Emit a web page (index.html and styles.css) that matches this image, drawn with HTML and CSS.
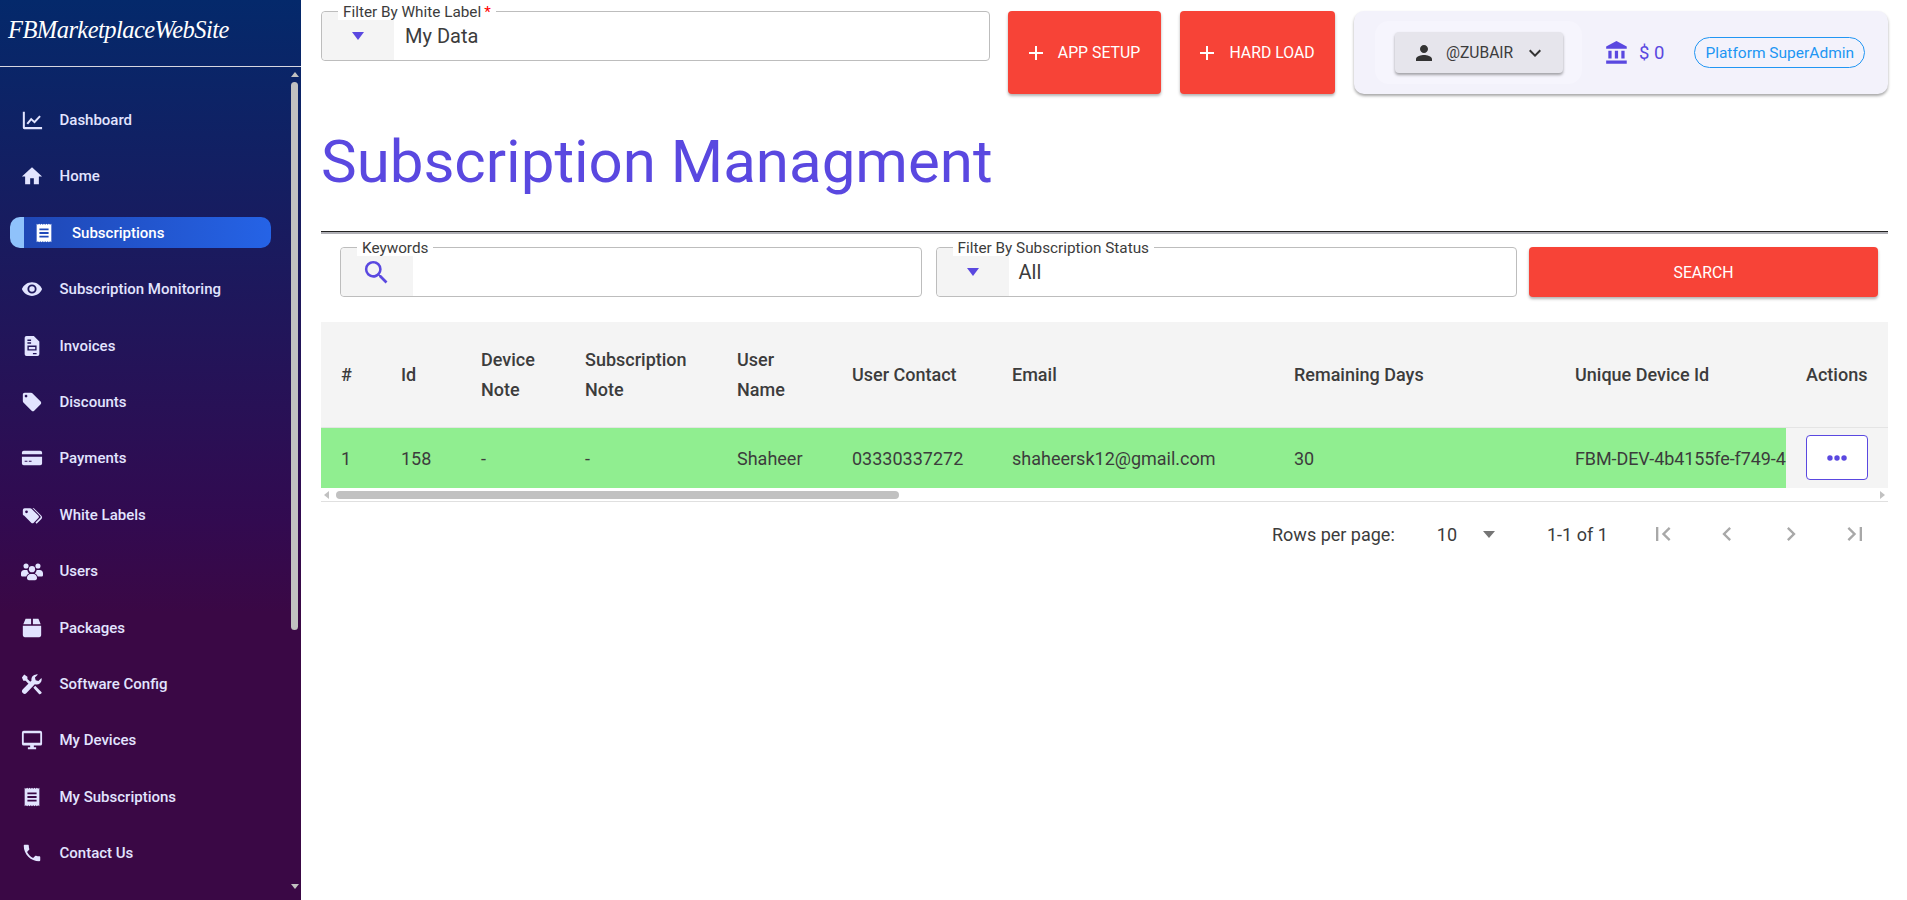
FILE: index.html
```html
<!DOCTYPE html>
<html>
<head>
    <title>Subscription Managment</title>
    <link rel="stylesheet" href="styles.css">
</head>
<body>
    <div class="app">
        <aside class="sidebar">
            <div class="logo">FBMarketplaceWebSite</div>
            <div class="nav-wrap">
                <nav class="nav">
                    <a class="nav-item"><svg viewBox="0 0 24 24"><path d="M2 3h2.200v16.600H23V22H3.500A1.500 1.500 0 0 1 2 20.500zM6 15.500l5-6 3.600 3.200L20 7l1.600 1.500-6.800 7.200-3.500-3.100-3.600 4.400z"/></svg>Dashboard</a>
                    <a class="nav-item"><svg viewBox="0 0 24 24"><path d="M10 21v-6.500h4V21h5.500v-8.500H23L12 2.500 1 12.500h3.500V21z"/></svg>Home</a>
                    <a class="nav-item active"><svg viewBox="0 0 24 24"><path fill-rule="evenodd" d="M4 2l1.300 1L6.700 2 8 3l1.300-1 1.400 1L12 2l1.300 1 1.400-1L16 3l1.300-1 1.400 1L20 2v20l-1.300-1-1.400 1-1.300-1-1.300 1-1.400-1-1.300 1-1.300-1-1.400 1L8 21l-1.300 1-1.400-1L4 22zM7 7v2h10V7zm0 4v2h10v-2zm0 4v2h10v-2z"/></svg>Subscriptions</a>
                    <a class="nav-item"><svg viewBox="0 0 24 24"><path fill-rule="evenodd" d="M12 4.500C7 4.500 2.730 7.610 1 12c1.730 4.390 6 7.500 11 7.500s9.270-3.110 11-7.500c-1.730-4.390-6-7.500-11-7.500zM12 17a5 5 0 1 1 0-10 5 5 0 0 1 0 10zm0-8a3 3 0 1 0 0 6 3 3 0 0 0 0-6z"/></svg>Subscription Monitoring</a>
                    <a class="nav-item"><svg viewBox="0 0 24 24"><path fill-rule="evenodd" d="M6 1h8l6 6v14a2 2 0 0 1-2 2H6a2 2 0 0 1-2-2V3a2 2 0 0 1 2-2zm1 4v1.500h4V5zm0 3v1.500h4V8zm0 3.500V17h10v-5.500zm1.500 1.500h7v2.500h-7zM13 19.500V21h4v-1.500z"/></svg>Invoices</a>
                    <a class="nav-item"><svg viewBox="0 0 24 24"><path fill-rule="evenodd" d="M21.410 11.580l-9-9C12.050 2.220 11.550 2 11 2H4c-1.100 0-2 .9-2 2v7c0 .55.22 1.050.59 1.420l9 9c.36.36.86.58 1.410.58s1.050-.22 1.410-.59l7-7c.37-.36.59-.86.59-1.410s-.23-1.060-.59-1.420zM5.500 7C4.670 7 4 6.330 4 5.500S4.670 4 5.500 4 7 4.670 7 5.500 6.330 7 5.500 7z"/></svg>Discounts</a>
                    <a class="nav-item"><svg viewBox="0 0 24 24"><path fill-rule="evenodd" d="M3 4h18a2 2 0 0 1 2 2v2H1V6a2 2 0 0 1 2-2zM1 10.500h22V18a2 2 0 0 1-2 2H3a2 2 0 0 1-2-2zM4 15v1.200h3V15zm4.500 0v1.200h3V15z"/></svg>Payments</a>
                    <a class="nav-item"><svg viewBox="0 0 24 24"><path fill-rule="evenodd" d="M2 6.500A2 2 0 0 1 4 4.500h6c.5 0 1 .2 1.400.6l7.500 7.500a2 2 0 0 1 0 2.800l-5 5a2 2 0 0 1-2.800 0l-7.500-7.500A2 2 0 0 1 2 11.500zM6 7a1.500 1.500 0 1 0 0 3 1.500 1.500 0 0 0 0-3zM14 4.500l8 8a2.800 2.800 0 0 1 0 4l-5 5-1.200-1.200 5.200-5.300a1.300 1.300 0 0 0 0-1.800l-8.500-8.700z"/></svg>White Labels</a>
                    <a class="nav-item"><svg viewBox="0 0 24 24"><circle cx="5.500" cy="6.500" r="2.800"/><circle cx="18.500" cy="6.500" r="2.800"/><circle cx="12" cy="10" r="3.400"/><path d="M0 14.500c0-2 1.500-3.500 3.500-3.500h3.400c.2 1.500 1 2.700 2 3.600-1.600.7-2.800 2-3.200 3.400H1.500A1.500 1.500 0 0 1 0 16.500zM24 14.500c0-2-1.500-3.500-3.500-3.500h-3.400c-.2 1.500-1 2.700-2 3.600 1.600.7 2.800 2 3.200 3.400h4.200a1.500 1.500 0 0 0 1.500-1.500zM6.500 19.500c0-2.300 1.800-4.300 4-4.300h3c2.200 0 4 2 4 4.300V20a2 2 0 0 1-2 2h-7a2 2 0 0 1-2-2z"/></svg>Users</a>
                    <a class="nav-item"><svg viewBox="0 0 24 24"><path d="M5 2h6v6H2.500zM13 2h6l2.500 6H13zM2 9.500h20V20a2 2 0 0 1-2 2H4a2 2 0 0 1-2-2z"/></svg>Packages</a>
                    <a class="nav-item"><svg viewBox="0 0 24 24"><path d="M3.500 1.500L7 4v2.500l4.500 4.500-2 2L5 8.500H2.500L1 5zM16.800 1.500a5.700 5.700 0 0 1 1.700.2l-3.300 3.300.8 3 3 .8 3.300-3.300a5.500 5.500 0 0 1-7.200 6.700L6 21.800a2.800 2.800 0 0 1-4-4l9.500-9.500a5.500 5.500 0 0 1 5.300-6.800zM15.500 14l7 7a2 2 0 0 1-2.600 2.100L13.500 16z"/></svg>Software Config</a>
                    <a class="nav-item"><svg viewBox="0 0 24 24"><path fill-rule="evenodd" d="M3 2h18a2 2 0 0 1 2 2v12a2 2 0 0 1-2 2h-7v2h2.500v2h-9v-2H10v-2H3a2 2 0 0 1-2-2V4a2 2 0 0 1 2-2zm0 2.500V15h18V4.500z"/></svg>My Devices</a>
                    <a class="nav-item"><svg viewBox="0 0 24 24"><path fill-rule="evenodd" d="M4 2l1.300 1L6.700 2 8 3l1.300-1 1.400 1L12 2l1.300 1 1.400-1L16 3l1.300-1 1.400 1L20 2v20l-1.300-1-1.400 1-1.300-1-1.300 1-1.400-1-1.300 1-1.300-1-1.400 1L8 21l-1.300 1-1.400-1L4 22zM7 7v2h10V7zm0 4v2h10v-2zm0 4v2h10v-2z"/></svg>My Subscriptions</a>
                    <a class="nav-item"><svg viewBox="0 0 24 24"><path d="M6.620 10.790c1.440 2.830 3.760 5.140 6.590 6.590l2.200-2.200c.27-.27.67-.36 1.020-.24 1.120.37 2.330.57 3.570.57.55 0 1 .45 1 1V20c0 .55-.45 1-1 1-9.390 0-17-7.610-17-17 0-.55.45-1 1-1h3.500c.55 0 1 .45 1 1 0 1.250.2 2.450.57 3.570.11.35.03.74-.25 1.020z"/></svg>Contact Us</a>
                </nav>
                <div class="v-scroll">
                    <span class="arrow-up"></span>
                    <div class="v-track"><div class="v-thumb"></div></div>
                    <span class="arrow-down"></span>
                </div>
            </div>
        </aside>

        <main class="main">
            <div class="top-row">
                <div class="field top-field">
                    <label>Filter By White Label<b>*</b></label>
                    <div class="addon"><span class="caret"></span></div>
                    <div class="value">My Data</div>
                </div>
                <button class="btn-red btn-setup"><svg viewBox="0 0 24 24"><path d="M19 13h-6v6h-2v-6H5v-2h6V5h2v6h6z"/></svg>APP SETUP</button>
                <button class="btn-red btn-load"><svg viewBox="0 0 24 24"><path d="M19 13h-6v6h-2v-6H5v-2h6V5h2v6h6z"/></svg>HARD LOAD</button>
                <div class="user-panel">
                    <div class="user-halo">
                        <div class="user-btn">
                            <svg viewBox="0 0 24 24"><path d="M12 12c2.210 0 4-1.790 4-4s-1.790-4-4-4-4 1.790-4 4 1.790 4 4 4zm0 2c-2.670 0-8 1.340-8 4v2h16v-2c0-2.660-5.330-4-8-4z"/></svg>
                            <span>@ZUBAIR</span>
                            <svg viewBox="0 0 24 24"><path d="M16.590 8.590L12 13.170 7.410 8.590 6 10l6 6 6-6z"/></svg>
                        </div>
                    </div>
                    <div class="balance">
                        <svg viewBox="0 0 24 24"><path d="M4 10v7h3v-7zm6 0v7h3v-7zM2 22h19v-3H2zm14-12v7h3v-7zm-4.500-9L2 6v2h19V6z"/></svg>
                        <span>$ 0</span>
                    </div>
                    <div class="role-chip">Platform SuperAdmin</div>
                </div>
            </div>

            <h1 class="page-title">Subscription Managment</h1>
            <div class="divider"></div>

            <div class="filter-row">
                <div class="field kw-field">
                    <label>Keywords</label>
                    <div class="addon"><svg viewBox="0 0 24 24"><path d="M15.500 14h-.79l-.28-.27A6.470 6.470 0 0 0 16 9.500 6.500 6.500 0 1 0 9.500 16c1.610 0 3.090-.59 4.230-1.570l.27.28v.79l5 4.990L20.490 19zm-6 0C7.010 14 5 11.990 5 9.500S7.010 5 9.500 5 14 7.010 14 9.500 11.990 14 9.500 14z"/></svg></div>
                    <div class="value"></div>
                </div>
                <div class="field">
                    <label>Filter By Subscription Status</label>
                    <div class="addon"><span class="caret"></span></div>
                    <div class="value">All</div>
                </div>
                <button class="btn-red btn-search">SEARCH</button>
            </div>

            <table class="data-table">
                <colgroup>
                    <col class="c-num"><col class="c-id"><col class="c-device"><col class="c-sub"><col class="c-user"><col class="c-contact"><col class="c-email"><col class="c-days"><col class="c-unique"><col class="c-actions">
                </colgroup>
                <thead>
                    <tr>
                        <th>#</th>
                        <th>Id</th>
                        <th>Device Note</th>
                        <th>Subscription Note</th>
                        <th>User Name</th>
                        <th>User Contact</th>
                        <th>Email</th>
                        <th>Remaining Days</th>
                        <th>Unique Device Id</th>
                        <th class="actions-head">Actions</th>
                    </tr>
                </thead>
                <tbody>
                    <tr>
                        <td>1</td>
                        <td>158</td>
                        <td>-</td>
                        <td>-</td>
                        <td>Shaheer</td>
                        <td>03330337272</td>
                        <td>shaheersk12@gmail.com</td>
                        <td>30</td>
                        <td class="clip">FBM-DEV-4b4155fe-f749-4</td>
                        <td class="actions-cell"><button class="more-btn"><svg viewBox="0 0 24 24"><circle cx="5.500" cy="12" r="2.500"/><circle cx="12" cy="12" r="2.500"/><circle cx="18.500" cy="12" r="2.500"/></svg></button></td>
                    </tr>
                </tbody>
            </table>
            <div class="h-scroll">
                <span class="arrow-left"></span>
                <div class="h-track"><div class="h-thumb"></div></div>
                <span class="arrow-right"></span>
            </div>

            <div class="pager">
                <span class="rows-label">Rows per page:</span>
                <span class="rows-value">10</span>
                <span class="rows-caret"></span>
                <span class="rows-range">1-1 of 1</span>
                <svg viewBox="0 0 24 24"><path d="M18.410 16.590L13.820 12l4.590-4.590L17 6l-6 6 6 6zM6 6h2v12H6z"/></svg>
                <svg viewBox="0 0 24 24"><path d="M15.410 7.410L14 6l-6 6 6 6 1.410-1.410L10.830 12z"/></svg>
                <svg viewBox="0 0 24 24"><path d="M10 6L8.590 7.410 13.170 12l-4.580 4.590L10 18l6-6z"/></svg>
                <svg viewBox="0 0 24 24"><path d="M5.590 7.410L10.180 12l-4.590 4.590L7 18l6-6-6-6zM16 6h2v12h-2z"/></svg>
            </div>
        </main>
    </div>
</body>
</html>
```

FILE: styles.css
```css
* {
    box-sizing: border-box;
}
html, body {
    height: 100%;
}
body {
    margin: 0;
    background-color: #fff;
    font-family: Roboto, Arial, sans-serif;
    color: #3c3c3c;
    overflow: hidden;
}
svg {
    fill: currentColor;
    flex: none;
}
.app {
    display: flex;
    height: 900px;
}

/* Sidebar */
.sidebar {
    width: 301px;
    flex: none;
    display: flex;
    flex-direction: column;
    background: linear-gradient(180deg, #04296b 0%, #320a50 58%, #3a0845 68%, #3a0845 100%);
    color: #e2e4ff;
}
.logo {
    height: 67px;
    padding: 16px 0 0 8px;
    border-bottom: 1px solid #d6d6e0;
    color: #fff;
    font-family: "Liberation Serif", serif;
    font-style: italic;
    font-size: 24.5px;
    letter-spacing: -.55px;
}
.nav-wrap {
    flex: 1;
    display: flex;
    min-height: 0;
}
.nav {
    flex: 1;
    padding: 37.6px 0 0 10px;
}
.nav-item {
    display: flex;
    align-items: center;
    gap: 16.5px;
    width: 261px;
    height: 31px;
    margin-bottom: 25.4px;
    padding-left: 11px;
    font-size: 15px;
    font-weight: 500;
}
.nav-item svg {
    width: 22px;
    height: 22px;
}
.nav-item.active {
    padding-left: 9px;
    gap: 17px;
    border-radius: 10px;
    border-left: 14px solid #8fc2fb;
    color: #fff;
    background: linear-gradient(90deg, #1f47b5, #2563e6);
}
.v-scroll {
    width: 10px;
    margin-right: 1.5px;
    display: flex;
    flex-direction: column;
    align-items: center;
    padding-top: 5px;
}
.arrow-up {
    border: 4px solid transparent;
    border-top: 0;
    border-bottom: 5px solid #c1c1c1;
}
.arrow-down {
    border: 4px solid transparent;
    border-bottom: 0;
    border-top: 5px solid #c1c1c1;
    margin-bottom: 11px;
}
.v-track {
    flex: 1;
    width: 7px;
    padding-top: 5px;
}
.v-thumb {
    height: 548px;
    background-color: #c1c1c1;
    border-radius: 4px;
}

/* Main */
.main {
    flex: 1;
    min-width: 0;
    padding: 11px 19px 0 20px;
}
.top-row {
    display: flex;
    align-items: flex-start;
    height: 83px;
}
.field {
    position: relative;
    display: flex;
    height: 50px;
    border: 1px solid #bdbdbd;
    border-radius: 4px;
    flex: 1;
}
.field label {
    position: absolute;
    left: 16px;
    top: -8px;
    padding: 0 5px;
    background-color: #fff;
    font-size: 15.3px;
    line-height: 16px;
    color: #3c3c3c;
}
.field label b {
    margin-left: 3px;
    color: #f00;
    font-weight: 400;
}
.kw-field {
    margin-right: 2px;
}
.addon {
    width: 72px;
    display: flex;
    align-items: center;
    justify-content: center;
    background-color: #f4f4f4;
    border-radius: 4px 0 0 4px;
    color: #5a48e0;
}
.addon svg {
    width: 31px;
    height: 31px;
    margin-left: -1px;
}
.caret {
    border: 6.5px solid transparent;
    border-bottom: 0;
    border-top: 8px solid #5a48e0;
}
.value {
    flex: 1;
    display: flex;
    align-items: center;
    padding-left: 10px;
    font-size: 20px;
}
.top-field {
    flex: none;
    width: 669px;
}
.top-field .value {
    padding-left: 11px;
}
.btn-red {
    display: flex;
    align-items: center;
    justify-content: center;
    gap: 10px;
    border: 0;
    border-radius: 4px;
    background-color: #f74337;
    color: #fff;
    font-family: inherit;
    font-size: 15.8px;
    font-weight: 400;
    box-shadow: 0 2px 3px rgba(0,0,0,.3);
}
.btn-red svg {
    width: 24px;
    height: 24px;
}
.btn-setup {
    width: 153px;
    height: 83px;
    margin-left: 18px;
    padding: 0 5px 0 0;
}
.btn-load {
    width: 155px;
    height: 83px;
    margin-left: 19px;
    padding: 0 5px 0 0;
}
.user-panel {
    flex: 1;
    height: 83px;
    margin-left: 19px;
    display: flex;
    align-items: center;
    border-radius: 10px;
    background-color: #f3f2fb;
    box-shadow: 0 2px 3px rgba(0,0,0,.35);
    padding-left: 21px;
}
.user-halo {
    width: 207px;
    height: 63px;
    padding: 0 20px;
    display: flex;
    align-items: center;
    background-color: #f6f5fd;
    border-radius: 14px;
}
.user-btn {
    width: 168px;
    height: 41px;
    display: flex;
    align-items: center;
    padding: 0 17px;
    gap: 10px;
    background-color: #e6e5ec;
    border-radius: 4px;
    box-shadow: 0 2px 3px rgba(0,0,0,.35);
    font-size: 15.6px;
    white-space: nowrap;
}
.user-btn svg {
    width: 24px;
    height: 24px;
    color: #333;
}
.balance {
    display: flex;
    align-items: center;
    gap: 9px;
    margin-left: 22px;
    color: #5a48e0;
    font-size: 18.500px;
}
.balance svg {
    width: 26px;
    height: 26px;
}
.role-chip {
    margin-left: 30px;
    height: 31px;
    padding: 0 10px;
    display: flex;
    align-items: center;
    border: 1px solid #2196f3;
    border-radius: 16px;
    color: #2196f3;
    font-size: 15.500px;
    white-space: nowrap;
}
.page-title {
    margin: 0;
    height: 137px;
    padding-top: 30px;
    font-size: 60px;
    line-height: 76px;
    font-weight: 400;
    color: #5a48e0;
}
.divider {
    height: 3px;
    border-top: 1px solid #222;
    background-color: #b0b0b6;
}
.filter-row {
    display: flex;
    gap: 12px;
    height: 88px;
    padding: 13px 10px 0 19px;
}
.btn-search {
    flex: none;
    width: 349px;
    height: 50px;
}
.data-table {
    width: 100%;
    table-layout: fixed;
    border-collapse: collapse;
    font-size: 18px;
}
.c-num { width: 60px; }
.c-id { width: 80px; }
.c-device { width: 104px; }
.c-sub { width: 152px; }
.c-user { width: 115px; }
.c-contact { width: 160px; }
.c-email { width: 282px; }
.c-days { width: 281px; }
.c-unique { width: 231px; }
.c-actions { width: 102px; }
th {
    height: 105px;
    padding: 2px 20px 0;
    background-color: #f4f4f4;
    text-align: left;
    font-weight: 500;
    line-height: 30px;
    border-bottom: 1px solid #e4e4e4;
}
td {
    height: 61px;
    padding: 2px 20px 0;
    background-color: #90ee90;
    white-space: nowrap;
}
td.clip {
    padding-right: 0;
    letter-spacing: -.1px;
    overflow: hidden;
}
td.actions-cell {
    padding-top: 0;
    background-color: #f4f4f4;
}
.more-btn {
    display: flex;
    align-items: center;
    justify-content: center;
    width: 62px;
    height: 45px;
    padding: 0;
    border: 1px solid #5a48e0;
    border-radius: 4px;
    background-color: #fff;
    color: #5a48e0;
}
.more-btn svg {
    width: 26px;
    height: 26px;
}
.h-scroll {
    display: flex;
    align-items: center;
    gap: 2px;
    height: 14px;
    padding: 0 3px;
    border-bottom: 1px solid #e0e0e0;
}
.arrow-left {
    border: 4px solid transparent;
    border-left: 0;
    border-right: 5px solid #c1c1c1;
}
.arrow-right {
    border: 4px solid transparent;
    border-right: 0;
    border-left: 5px solid #c1c1c1;
}
.h-track {
    flex: 1;
    padding-left: 5px;
}
.h-thumb {
    width: 563px;
    height: 8px;
    background-color: #c1c1c1;
    border-radius: 4px;
}
.pager {
    display: flex;
    align-items: center;
    height: 64px;
    padding-left: 951px;
    font-size: 18px;
    white-space: nowrap;
}
.pager svg {
    width: 28px;
    height: 28px;
    margin-right: 36px;
    color: #a8a8a8;
}
.rows-value {
    margin-left: 42px;
}
.rows-caret {
    margin-left: 26px;
    border: 6px solid transparent;
    border-bottom: 0;
    border-top: 7px solid #757575;
}
.rows-range {
    margin: 0 41px 0 52px;
}
```
